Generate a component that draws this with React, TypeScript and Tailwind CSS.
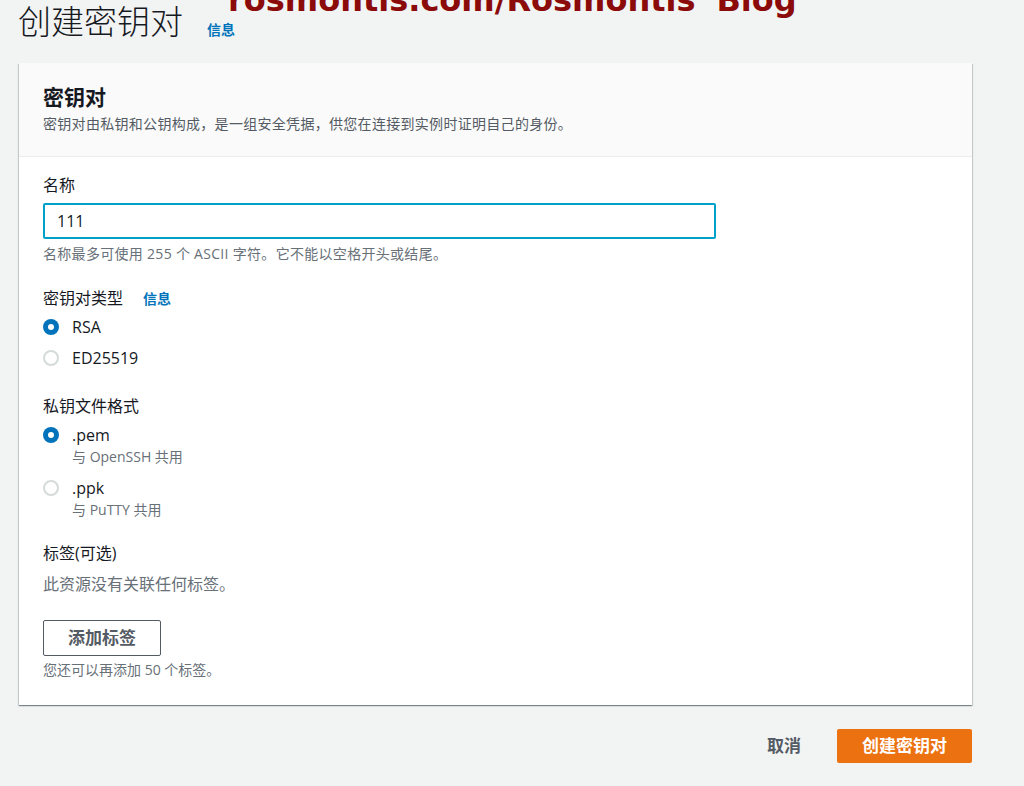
import { useState } from 'react';

const font = { fontFamily: '"Open Sans", "Noto Sans CJK SC", sans-serif' };

function Radio({ checked }: { checked: boolean }) {
  return checked ? (
    <span className="mt-[4px] flex h-4 w-4 shrink-0 items-center justify-center rounded-full bg-[#0073bb]">
      <span className="h-[6px] w-[6px] rounded-full bg-white" />
    </span>
  ) : (
    <span className="mt-[4px] h-4 w-4 shrink-0 rounded-full border-2 border-[#d5dbdb] bg-white" />
  );
}

function Option({ checked, label, sub }: { checked: boolean; label: string; sub?: string }) {
  return (
    <div className="flex gap-[13px]">
      <Radio checked={checked} />
      <div>
        <div className="text-[16px] leading-[24px] text-[#16191f]">{label}</div>
        {sub && <div className="text-[14px] leading-[20px] text-[#687078]">{sub}</div>}
      </div>
    </div>
  );
}

export default function App() {
  const [name, setName] = useState('111');

  return (
    <div className="relative min-h-[786px] w-[1024px] overflow-hidden bg-[#f2f3f3]" style={font}>
      {/* watermark */}
      <div
        className="absolute left-[228px] top-[-19px] text-[32px] font-bold leading-[38px] text-[#8b0a0a]"
        style={{ fontFamily: '"DejaVu Sans", sans-serif' }}
      >
        rosmontis.com/Rosmontis' Blog
      </div>

      <div className="flex items-end gap-[24px] pl-[18px]">
        <h1 className="text-[33px] font-light leading-[44px] text-[#16191f]">创建密钥对</h1>
        <span className="mb-[4px] text-[14px] font-bold leading-[20px] text-[#0073bb]">信息</span>
      </div>

      <div className="ml-[19px] mt-[19px] w-[953px] bg-white shadow-[0_1px_1px_0_rgba(0,28,36,0.3),1px_1px_1px_0_rgba(0,28,36,0.15),-1px_1px_1px_0_rgba(0,28,36,0.15)]">
        <div className="h-[94px] border-b border-[#eaeded] bg-[#fafafa] px-[24px] pt-[20px]">
          <h2 className="text-[21px] font-bold leading-[28px] text-[#16191f]">密钥对</h2>
          <p className="mt-[3px] text-[14px] leading-[20px] tracking-[0.3px] text-[#545b64]">
            密钥对由私钥和公钥构成，是一组安全凭据，供您在连接到实例时证明自己的身份。
          </p>
        </div>

        <div className="px-[24px] pb-[25px] pt-[16px]">
          <div className="text-[16px] leading-[24px] text-[#16191f]">名称</div>
          <input
            value={name}
            onChange={e => setName(e.target.value)}
            className="mt-[6px] block h-[36px] w-[673px] rounded-[2px] border-2 border-[#00a1c9] px-[12px] text-[16px] text-[#16191f] outline-none"
          />
          <div className="mt-[5px] text-[14px] leading-[20px] tracking-[0.3px] text-[#687078]">
            名称最多可使用 255 个 ASCII 字符。它不能以空格开头或结尾。
          </div>

          <div className="mt-[22px] flex items-center gap-[20px]">
            <span className="text-[16px] leading-[24px] text-[#16191f]">密钥对类型</span>
            <span className="text-[14px] font-bold text-[#0073bb]">信息</span>
          </div>
          <div className="mt-[5px] flex flex-col gap-[7px]">
            <Option checked label="RSA" />
            <Option checked={false} label="ED25519" />
          </div>

          <div className="mt-[24px] text-[16px] leading-[24px] text-[#16191f]">私钥文件格式</div>
          <div className="mt-[5px] flex flex-col gap-[9px]">
            <Option checked label=".pem" sub="与 OpenSSH 共用" />
            <Option checked={false} label=".ppk" sub="与 PuTTY 共用" />
          </div>

          <div className="mt-[21px] text-[16px] leading-[24px] text-[#16191f]">标签(可选)</div>
          <div className="mt-[7px] text-[16px] leading-[24px] text-[#687078]">此资源没有关联任何标签。</div>
          <button className="mt-[24px] h-[36px] w-[118px] rounded-[2px] border border-[#545b64] bg-white text-[17px] font-bold text-[#545b64]">
            添加标签
          </button>
          <div className="mt-[4px] text-[14px] leading-[20px] text-[#687078]">您还可以再添加 50 个标签。</div>
        </div>
      </div>

      <div className="mt-[24px] flex w-[972px] items-center justify-end gap-[36px]">
        <button className="text-[17px] font-bold text-[#545b64]">取消</button>
        <button className="h-[34px] w-[135px] rounded-[2px] bg-[#ec7211] text-[17px] font-bold text-white">创建密钥对</button>
      </div>
    </div>
  );
}
